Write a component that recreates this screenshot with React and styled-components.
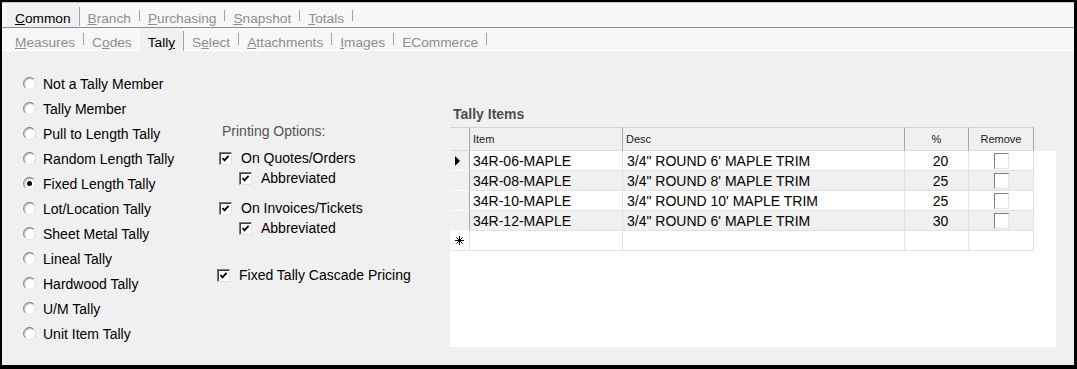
import React from 'react';
import styled, { createGlobalStyle } from 'styled-components';

const GlobalStyle = createGlobalStyle`
  html, body {
    margin: 0;
    padding: 0;
    background: #fff;
  }
  body {
    font-family: "Liberation Sans", Arial, sans-serif;
  }
`;

const Frame = styled.div`
  box-sizing: border-box;
  width: 1077px;
  height: 369px;
  border-style: solid;
  border-color: #000;
  border-width: 2px 3px 4px 2px;
  background: #f0f0f0;
  display: flex;
  flex-direction: column;
  font-size: 14px;
  color: #000;
`;

const TabStrip = styled.div`
  box-sizing: border-box;
  flex: none;
  display: flex;
  align-items: stretch;
  height: ${props => props.$height}px;
  padding-left: 5px;
  background: #f7f7f7;
  border-top: ${props => (props.$top ? '1px solid #c6c6c6' : 'none')};
  border-bottom: 1px solid ${props => props.$line};
`;

const Tab = styled.div`
  box-sizing: border-box;
  padding: ${props => props.$pt}px 8px 0 8px;
  font-size: 13.7px;
  line-height: 16px;
  white-space: nowrap;
  color: ${props => (props.$active ? '#000' : '#8d8d8d')};
  background: ${props => (props.$active ? '#f0f0f0' : 'transparent')};
  margin-bottom: ${props => (props.$active && props.$cover ? '-1px' : '0')};

  u {
    text-decoration: underline;
    text-underline-offset: 1px;
  }
`;

const Sep = styled.span`
  flex: none;
  width: 1px;
  margin-top: ${props => props.$mt}px;
  height: ${props => props.$h}px;
  background: #a3a3a3;
`;

const Body = styled.div`
  flex: 1;
  display: grid;
  grid-template-columns: 215px 233px 606px;
  align-items: start;
`;

const RadioList = styled.div`
  padding: 20px 0 0 21px;
  display: flex;
  flex-direction: column;
`;

const RadioRow = styled.label`
  height: 25px;
  display: flex;
  align-items: center;
  gap: 7px;
  white-space: nowrap;
`;

const RadioDot = styled.span`
  box-sizing: border-box;
  flex: none;
  width: 13px;
  height: 13px;
  border-radius: 50%;
  border: 1px solid;
  border-color: #7e7e7e #dadada #e6e6e6 #8a8a8a;
  background: #fff;
  box-shadow: inset 1px 1px 0 #bdbdbd;
  display: flex;
  align-items: center;
  justify-content: center;

  &::after {
    content: '';
    width: 5px;
    height: 5px;
    border-radius: 50%;
    background: ${props => (props.$on ? '#000' : 'transparent')};
  }
`;

const Options = styled.div`
  padding-top: 72px;
  display: flex;
  flex-direction: column;
`;

const OptionsLabel = styled.div`
  padding-left: 5px;
  line-height: 16px;
  color: #555;
`;

const CheckRow = styled.label`
  height: 20px;
  margin-top: ${props => props.$mt}px;
  padding-left: ${props => props.$indent}px;
  display: flex;
  align-items: center;
  gap: 9px;
  white-space: nowrap;
`;

const CheckBox = styled.span`
  box-sizing: border-box;
  flex: none;
  width: 13px;
  height: 13px;
  background: #fff;
  border: 1px solid;
  border-color: #7a7a7a #e3e3e3 #e3e3e3 #7a7a7a;
  box-shadow: inset 1px 1px 0 #404040;
  display: flex;
  align-items: center;
  justify-content: center;
`;

const TallyPanel = styled.div`
  padding-top: 55px;
  display: flex;
  flex-direction: column;
`;

const PanelTitle = styled.div`
  padding-left: 3px;
  line-height: 16px;
  font-weight: bold;
  color: #4e4e4e;
`;

const Grid = styled.div`
  margin-top: 5px;
  height: 220px;
  background: #fff;
  display: flex;
  flex-direction: column;
`;

const columns = '20px 153px 282px 64px 65px 22px';

const HeaderRow = styled.div`
  display: grid;
  grid-template-columns: ${columns};
  height: 24px;
  background: #f0f0f0;
`;

const HeaderCell = styled.div`
  box-sizing: border-box;
  display: flex;
  align-items: center;
  justify-content: ${props => (props.$center ? 'center' : 'flex-start')};
  padding-left: ${props => (props.$center ? 0 : 3)}px;
  font-size: 11px;
  color: #1a1a1a;
  border-top: 1px solid #d4d4d4;
  border-right: 1px solid #a6a6a6;
  border-bottom: 1px solid #dcdcdc;
`;

const HeaderFill = styled.div`
  background: #f0f0f0;
`;

const Row = styled.div`
  display: grid;
  grid-template-columns: ${columns};
  height: 20px;
`;

const RowHead = styled.div`
  box-sizing: border-box;
  display: flex;
  align-items: center;
  padding-left: 5px;
  background: ${props => (props.$blank ? '#fff' : '#f0f0f0')};
  border-right: 1px solid ${props => (props.$blank ? '#e2e2e2' : '#a6a6a6')};
  border-bottom: 1px solid ${props => (props.$blank ? '#e2e2e2' : '#fbfbfb')};
`;

const Cell = styled.div`
  box-sizing: border-box;
  display: flex;
  align-items: center;
  justify-content: ${props => (props.$center ? 'center' : 'flex-start')};
  padding-left: ${props => props.$pl}px;
  background: ${props => (props.$alt ? '#f0f0f0' : '#fff')};
  border-right: 1px solid #e2e2e2;
  border-bottom: 1px solid #e2e2e2;
  white-space: nowrap;
  overflow: hidden;
`;

const RemoveBox = styled.span`
  box-sizing: border-box;
  width: 15px;
  height: 16px;
  background: #fff;
  border: 1px solid;
  border-color: #7f7f7f #e4e4e4 #e4e4e4 #7f7f7f;
`;

const Mnemonic = ({ text, at }) =>
    at < 0 ? (
        text
    ) : (
        <>
            {text.slice(0, at)}
            <u>{text[at]}</u>
            {text.slice(at + 1)}
        </>
    );

const Check = () => (
    <svg width="9" height="9" viewBox="0 0 9 9">
        <polyline
            points="1.5,4 3.5,6.3 7.6,1.8"
            fill="none"
            stroke="#000"
            strokeWidth="1.8"
        />
    </svg>
);

const CurrentRow = () => (
    <svg width="6" height="10" viewBox="0 0 6 10">
        <polygon points="0,0 5,5 0,10" fill="#000" />
    </svg>
);

const NewRow = () => (
    <svg width="9" height="9" viewBox="0 0 9 9" stroke="#000" strokeWidth="1">
        <line x1="4.5" y1="0" x2="4.5" y2="9" />
        <line x1="0" y1="4.5" x2="9" y2="4.5" />
        <line x1="1.3" y1="1.3" x2="7.7" y2="7.7" />
        <line x1="7.7" y1="1.3" x2="1.3" y2="7.7" />
    </svg>
);

const mainTabs = [
    { label: 'Common', at: 0, active: true },
    { label: 'Branch', at: 0 },
    { label: 'Purchasing', at: 0 },
    { label: 'Snapshot', at: 0 },
    { label: 'Totals', at: 0 },
];

const subTabs = [
    { label: 'Measures', at: 0 },
    { label: 'Codes', at: 1 },
    { label: 'Tally', at: 4, active: true },
    { label: 'Select', at: 1 },
    { label: 'Attachments', at: 0 },
    { label: 'Images', at: 0 },
    { label: 'ECommerce', at: -1 },
];

const tallyTypes = [
    'Not a Tally Member',
    'Tally Member',
    'Pull to Length Tally',
    'Random Length Tally',
    'Fixed Length Tally',
    'Lot/Location Tally',
    'Sheet Metal Tally',
    'Lineal Tally',
    'Hardwood Tally',
    'U/M Tally',
    'Unit Item Tally',
];

const printOptions = [
    { label: 'On Quotes/Orders', indent: 2, mt: 9 },
    { label: 'Abbreviated', indent: 22, mt: 0 },
    { label: 'On Invoices/Tickets', indent: 2, mt: 10 },
    { label: 'Abbreviated', indent: 22, mt: 0 },
    { label: 'Fixed Tally Cascade Pricing', indent: 0, mt: 27 },
];

const tallyItems = [
    { item: '34R-06-MAPLE', desc: '3/4" ROUND 6\' MAPLE TRIM', pct: 20 },
    { item: '34R-08-MAPLE', desc: '3/4" ROUND 8\' MAPLE TRIM', pct: 25 },
    { item: '34R-10-MAPLE', desc: '3/4" ROUND 10\' MAPLE TRIM', pct: 25 },
    { item: '34R-12-MAPLE', desc: '3/4" ROUND 6\' MAPLE TRIM', pct: 30 },
];

const TabRow = ({ tabs, height, top, line, pt, sep, tall, cover }) => (
    <TabStrip $height={height} $top={top} $line={line}>
        {tabs.map((tab, i) => {
            const next = tabs[i + 1];
            return (
                <React.Fragment key={tab.label}>
                    <Tab $active={tab.active} $pt={pt} $cover={cover}>
                        <Mnemonic text={tab.label} at={tab.at} />
                    </Tab>
                    {!(next && next.active) &&
                        (tab.active ? (
                            <Sep $mt={tall[0]} $h={tall[1]} />
                        ) : (
                            <Sep $mt={sep[0]} $h={sep[1]} />
                        ))}
                </React.Fragment>
            );
        })}
    </TabStrip>
);

export default function App() {
    return (
        <>
            <GlobalStyle />
            <Frame>
                <TabRow
                    tabs={mainTabs}
                    height={26}
                    top
                    line="#8c8c8c"
                    pt={8}
                    sep={[7, 11]}
                    tall={[4, 19]}
                />
                <TabRow
                    tabs={subTabs}
                    height={23}
                    line="#ffffff"
                    pt={7}
                    sep={[5, 12]}
                    tall={[3, 20]}
                    cover
                />
                <Body>
                    <RadioList>
                        {tallyTypes.map(name => (
                            <RadioRow key={name}>
                                <RadioDot $on={name === 'Fixed Length Tally'} />
                                {name}
                            </RadioRow>
                        ))}
                    </RadioList>

                    <Options>
                        <OptionsLabel>Printing Options:</OptionsLabel>
                        {printOptions.map((opt, i) => (
                            <CheckRow key={i} $indent={opt.indent} $mt={opt.mt}>
                                <CheckBox>
                                    <Check />
                                </CheckBox>
                                {opt.label}
                            </CheckRow>
                        ))}
                    </Options>

                    <TallyPanel>
                        <PanelTitle>Tally Items</PanelTitle>
                        <Grid>
                            <HeaderRow>
                                <HeaderCell />
                                <HeaderCell>Item</HeaderCell>
                                <HeaderCell>Desc</HeaderCell>
                                <HeaderCell $center>%</HeaderCell>
                                <HeaderCell $center>Remove</HeaderCell>
                                <HeaderFill />
                            </HeaderRow>
                            {tallyItems.map((row, i) => (
                                <Row key={row.item}>
                                    <RowHead>{i === 0 && <CurrentRow />}</RowHead>
                                    <Cell $alt={i % 2 === 1} $pl={3}>
                                        {row.item}
                                    </Cell>
                                    <Cell $alt={i % 2 === 1} $pl={4}>
                                        {row.desc}
                                    </Cell>
                                    <Cell $alt={i % 2 === 1} $center $pl={8}>
                                        {row.pct}
                                    </Cell>
                                    <Cell $alt={i % 2 === 1} $center $pl={0}>
                                        <RemoveBox />
                                    </Cell>
                                </Row>
                            ))}
                            <Row>
                                <RowHead $blank>
                                    <NewRow />
                                </RowHead>
                                <Cell $pl={3} />
                                <Cell $pl={4} />
                                <Cell $pl={0} />
                                <Cell $pl={0} />
                            </Row>
                        </Grid>
                    </TallyPanel>
                </Body>
            </Frame>
        </>
    );
}
